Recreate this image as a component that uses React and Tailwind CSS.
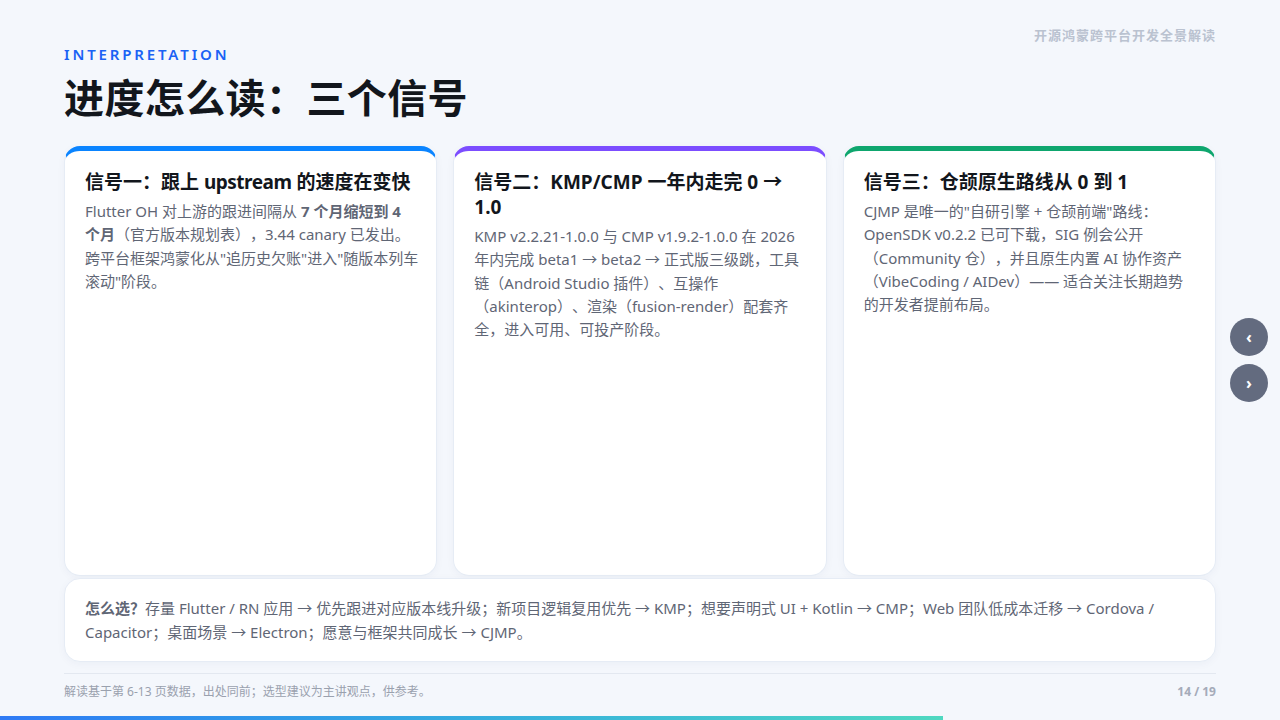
import React from 'react'

const Card = ({ color, title, children }) => {
  return (
    <div className={`bg-white rounded-2xl border border-[#e6ecf5] border-t-[5px] px-5 pt-[19px] shadow-[0_2px_8px_rgba(30,50,90,0.04)] ${color}`}>
      <h2 className='text-[19px] leading-[25px] font-bold text-[#12161c]'>{title}</h2>
      <p className='mt-[5px] text-[15px] leading-[23.25px] text-[#5f6675]'>{children}</p>
    </div>
  )
}

const App = () => {
  return (
    <div lang='zh-CN' className="relative w-[1280px] h-[720px] overflow-hidden bg-[#f4f7fc] font-['Noto_Sans','Noto_Sans_CJK_SC',sans-serif] [text-spacing-trim:space-all]">
      <div className='flex flex-col h-full px-16 pt-[25px]'>
        <div className='text-right text-[13px] leading-5 font-bold tracking-[1px] text-[#bac2d0]'>开源鸿蒙跨平台开发全景解读</div>

        <div className='-mt-[1px] text-[15px] leading-5 font-semibold tracking-[2.85px] text-[#1a62f5]'>INTERPRETATION</div>
        <h1 className='mt-[10px] text-[40px] leading-[48px] font-bold tracking-[0.4px] text-[#12161c]'>进度怎么读：三个信号</h1>

        <div className='grid grid-cols-3 gap-4 mt-[24px] h-[430px]'>
          <Card color='border-t-[#0a84ff]' title={<>信号一：跟上 <span className='tracking-[-0.5px]'>upstream</span> 的速度在变快</>}>
            Flutter OH 对上游的跟进间隔从 <b>7 个月缩短到 4 个月</b>（官方版本规划表），3.44 canary 已发出。<br />
            <span className='whitespace-nowrap'>跨平台框架鸿蒙化从"追历史欠账"进入"随版本列车</span><br />滚动"阶段。
          </Card>
          <Card color='border-t-[#7c4dff]' title='信号二：KMP/CMP 一年内走完 0 → 1.0'>
            KMP v2.2.21-1.0.0 与 CMP v1.9.2-1.0.0 在 2026 年内完成 beta1 → beta2 → 正式版三级跳，工具链（Android Studio 插件）、互操作（akinterop）、渲染（fusion-render）配套齐全，进入可用、可投产阶段。
          </Card>
          <Card color='border-t-[#0ea66e]' title='信号三：仓颉原生路线从 0 到 1'>
            CJMP 是唯一的"自研引擎 + 仓颉前端"路线：OpenSDK v0.2.2 已可下载，SIG 例会公开（Community 仓），并且原生内置 AI 协作资产（VibeCoding / AIDev）—— 适合关注长期趋势的开发者提前布局。
          </Card>
        </div>

        <div className='mt-[2px] h-[84px] bg-white rounded-2xl border border-[#e6ecf5] px-5 pt-[17px] text-[15px] leading-[24px] text-[#5f6675] shadow-[0_2px_8px_rgba(30,50,90,0.04)]'>
          <b>怎么选？</b>存量 Flutter / RN 应用 → 优先跟进对应版本线升级；新项目逻辑复用优先 → KMP；想要声明式 UI + Kotlin → CMP；Web 团队低成本迁移 → Cordova / Capacitor；桌面场景 → Electron；愿意与框架共同成长 → CJMP。
        </div>

        <div className='mt-[11px] border-t border-[#e3e8f0] pt-[9px] flex justify-between text-[12px] leading-[17px] text-[#9aa1ae]'>
          <span>解读基于第 6-13 页数据，出处同前；选型建议为主讲观点，供参考。</span>
          <span className='font-bold text-[#a5abb9]'>14 / 19</span>
        </div>
      </div>

      <div className='absolute right-3 top-[318px] flex flex-col gap-2'>
        <button className='w-[38px] h-[38px] rounded-full bg-[#636b7f] text-white text-base font-bold flex items-center justify-center'>‹</button>
        <button className='w-[38px] h-[38px] rounded-full bg-[#636b7f] text-white text-base font-bold flex items-center justify-center'>›</button>
      </div>

      <div className='absolute left-0 bottom-0 h-1 w-[943px] bg-gradient-to-r from-[#2f7af5] to-[#4fd8c0]'></div>
    </div>
  )
}

export default App
